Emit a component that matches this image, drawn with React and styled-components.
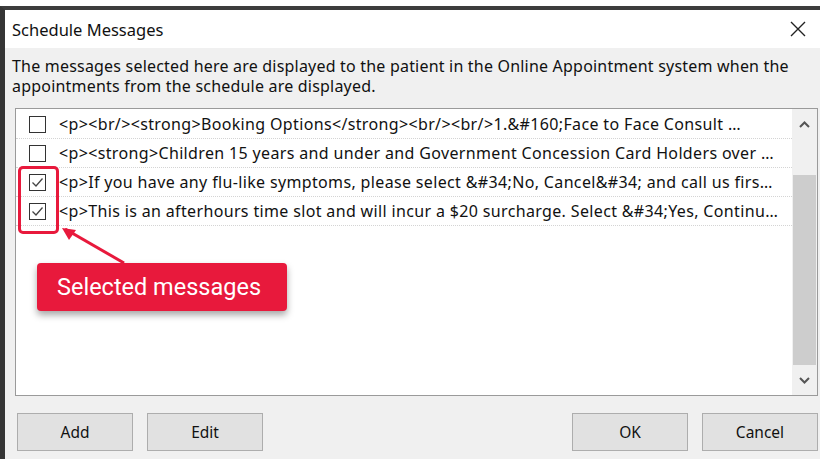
import React from "react";
import styled, { createGlobalStyle } from "styled-components";

const GlobalStyle = createGlobalStyle`
  html, body {
    margin: 0;
    padding: 0;
    background: #ffffff;
  }
  body {
    width: 820px;
    height: 459px;
    overflow: hidden;
    font-family: "Noto Sans", "Open Sans", sans-serif;
  }
`;

const messages = [
  {
    text: "<p><br/><strong>Booking Options</strong><br/><br/>1.&#160;Face to Face Consult …",
    checked: false,
  },
  {
    text: "<p><strong>Children 15 years and under and Government Concession Card Holders over …",
    checked: false,
  },
  {
    text: "<p>If you have any flu-like symptoms, please select &#34;No, Cancel&#34; and call us firs…",
    checked: true,
  },
  {
    text: "<p>This is an afterhours time slot and will incur a $20 surcharge. Select &#34;Yes, Continu…",
    checked: true,
  },
];

const App = () => {
  return (
    <Page>
      <GlobalStyle />
      <Window>
        <TitleBar>
          <Title>Schedule Messages</Title>
          <CloseButton>
            <svg width="16" height="16" viewBox="0 0 16 16">
              <path d="M1 1 L15 15 M15 1 L1 15" stroke="#222" strokeWidth="1.4" />
            </svg>
          </CloseButton>
        </TitleBar>
        <Body>
          <Description>
            The messages selected here are displayed to the patient in the Online Appointment system when the
            appointments from the schedule are displayed.
          </Description>
          <ListBox>
            <Rows>
              {messages.map((m, i) => (
                <Row key={i}>
                  <CheckBox>
                    {m.checked && (
                      <svg width="15" height="15" viewBox="0 0 15 15">
                        <path d="M2.5 7.5 L6 11 L12.5 3.5" fill="none" stroke="#444" strokeWidth="1.3" />
                      </svg>
                    )}
                  </CheckBox>
                  <RowText>{m.text}</RowText>
                </Row>
              ))}
            </Rows>
            <ScrollBar>
              <ScrollArrow>
                <svg width="11" height="7" viewBox="0 0 11 7">
                  <path d="M1 6 L5.5 1.5 L10 6" fill="none" stroke="#555" strokeWidth="2" />
                </svg>
              </ScrollArrow>
              <ScrollTrack>
                <ScrollThumb />
              </ScrollTrack>
              <ScrollArrow>
                <svg width="11" height="7" viewBox="0 0 11 7">
                  <path d="M1 1 L5.5 5.5 L10 1" fill="none" stroke="#555" strokeWidth="2" />
                </svg>
              </ScrollArrow>
            </ScrollBar>
          </ListBox>
          <ButtonRow>
            <ButtonGroup>
              <Button>Add</Button>
              <Button>Edit</Button>
            </ButtonGroup>
            <ButtonGroup>
              <Button>OK</Button>
              <Button>Cancel</Button>
            </ButtonGroup>
          </ButtonRow>
        </Body>
      </Window>

      {/* annotation laid over the dialog */}
      <Highlight />
      <Pointer width="120" height="60" viewBox="0 0 120 60">
        <path d="M64 35 L5 1" stroke="#e8193c" strokeWidth="3" fill="none" />
        <path d="M2 0 L16 2 L9 12 Z" fill="#e8193c" />
      </Pointer>
      <Callout>Selected messages</Callout>
    </Page>
  );
};

export default App;

const Page = styled.div`
  position: relative;
  width: 820px;
  height: 459px;
  overflow: hidden;
`;

const Window = styled.div`
  margin-top: 6px;
  height: 453px;
  border-top: 4px solid #3d3d3d;
  border-left: 5px solid #353535;
  background: #f0f0f0;
  display: flex;
  flex-direction: column;
  box-sizing: border-box;
`;

const TitleBar = styled.div`
  height: 38px;
  background: #ffffff;
  display: flex;
  align-items: center;
  justify-content: space-between;
  padding: 0 14px 0 7px;
`;

const Title = styled.div`
  font-size: 16.5px;
  color: #111;
`;

const CloseButton = styled.div`
  display: flex;
  align-items: center;
`;

const Body = styled.div`
  flex: 1;
  display: flex;
  flex-direction: column;
  padding: 8px 2px 0 10px;
`;

const Description = styled.div`
  font-size: 16px;
  letter-spacing: 0.2px;
  line-height: 20px;
  color: #111;
  margin-left: -3px;
`;

const ListBox = styled.div`
  margin-top: 12px;
  height: 288px;
  box-sizing: border-box;
  border: 1px solid #9a9a9a;
  background: #ffffff;
  display: flex;
`;

const Rows = styled.div`
  flex: 1;
  min-width: 0;
  padding-top: 1px;
`;

const Row = styled.div`
  height: 29px;
  display: flex;
  align-items: center;
  padding-left: 13px;
  border-bottom: 1px dotted #d4d4d4;
  box-sizing: border-box;
`;

const CheckBox = styled.div`
  width: 17px;
  height: 17px;
  box-sizing: border-box;
  border: 1px solid #333;
  background: #fff;
  display: flex;
  align-items: center;
  justify-content: center;
  flex-shrink: 0;
`;

const RowText = styled.div`
  margin-left: 13px;
  font-size: 16px;
  letter-spacing: 0.35px;
  color: #111;
  white-space: nowrap;
  overflow: hidden;
  text-overflow: ellipsis;
`;

const ScrollBar = styled.div`
  width: 25px;
  background: #f0f0f0;
  display: flex;
  flex-direction: column;
`;

const ScrollArrow = styled.div`
  height: 30px;
  display: flex;
  align-items: center;
  justify-content: center;
`;

const ScrollTrack = styled.div`
  flex: 1;
  display: flex;
  flex-direction: column;
  justify-content: flex-end;
`;

const ScrollThumb = styled.div`
  height: 190px;
  margin: 0 1px;
  background: #cdcdcd;
`;

const ButtonRow = styled.div`
  margin-top: 17px;
  display: flex;
  justify-content: space-between;
  padding-left: 2px;
`;

const ButtonGroup = styled.div`
  display: flex;
  gap: 14px;
`;

const Button = styled.div`
  width: 116px;
  height: 38px;
  box-sizing: border-box;
  border: 1px solid #adadad;
  background: #e1e1e1;
  display: flex;
  align-items: center;
  justify-content: center;
  font-size: 15.5px;
  color: #111;
`;

const Highlight = styled.div`
  position: absolute;
  left: 18px;
  top: 166px;
  width: 41px;
  height: 68px;
  box-sizing: border-box;
  border: 3px solid #e8193c;
  border-radius: 5px;
`;

const Pointer = styled.svg`
  position: absolute;
  left: 60px;
  top: 228px;
`;

const Callout = styled.div`
  position: absolute;
  left: 37px;
  top: 263px;
  width: 250px;
  height: 48px;
  border-radius: 4px;
  background: #e8193c;
  box-shadow: 0 4px 7px rgba(0, 0, 0, 0.35);
  color: #fff;
  font-family: Roboto, "Liberation Sans", sans-serif;
  font-size: 23.5px;
  display: flex;
  align-items: center;
  padding-left: 20px;
  box-sizing: border-box;
`;
